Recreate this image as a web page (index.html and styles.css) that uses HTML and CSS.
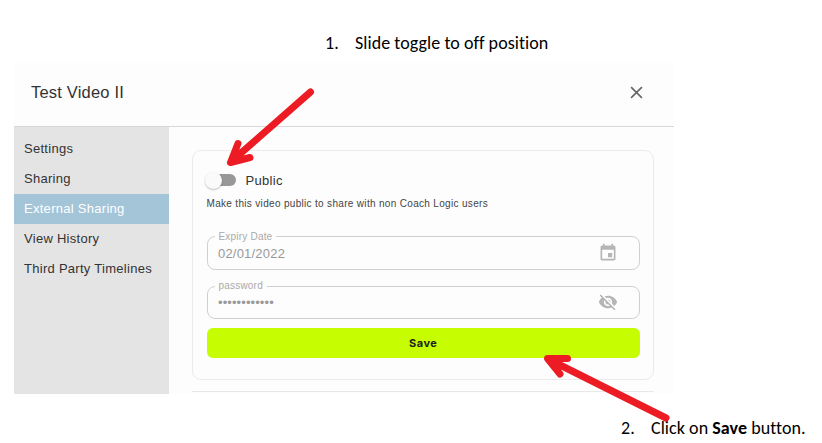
FILE: index.html
```html
<!DOCTYPE html>
<html lang="en">
<head>
    <meta charset="UTF-8">
    <meta name="viewport" content="width=device-width, initial-scale=1.0">
    <title>Test Video II</title>
    <link rel="stylesheet" href="styles.css">
</head>
<body>
    <div class="note note-toggle"><span class="num">1.</span><span>Slide toggle to off position</span></div>

    <div class="dialog">
        <div class="dialog-header">
            <h1>Test Video II</h1>
            <svg class="close" viewBox="0 0 12 12"><path d="M1 1l10 10M11 1L1 11"/></svg>
        </div>
        <div class="dialog-body">
            <nav class="sidebar">
                <a>Settings</a>
                <a>Sharing</a>
                <a class="active">External Sharing</a>
                <a>View History</a>
                <a>Third Party Timelines</a>
            </nav>
            <div class="content">
                <div class="card">
                    <div class="toggle-row">
                        <div class="toggle"><div class="knob"></div></div>
                        <span class="toggle-label">Public</span>
                    </div>
                    <p class="hint">Make this video public to share with non Coach Logic users</p>
                    <fieldset class="field field-date">
                        <legend>Expiry Date</legend>
                        <div class="field-row">
                            <span class="value">02/01/2022</span>
                            <svg class="icon" viewBox="0 0 24 24"><path d="M17 12h-5v5h5v-5zM16 1v2H8V1H6v2H5c-1.11 0-1.99.9-1.99 2L3 19c0 1.1.89 2 2 2h14c1.1 0 2-.9 2-2V5c0-1.1-.9-2-2-2h-1V1h-2zm3 18H5V8h14v11z"/></svg>
                        </div>
                    </fieldset>
                    <fieldset class="field field-password">
                        <legend>password</legend>
                        <div class="field-row">
                            <span class="value dots">••••••••••••</span>
                            <svg class="icon" viewBox="0 0 24 24"><path d="M12 7c2.76 0 5 2.24 5 5 0 .65-.13 1.26-.36 1.83l2.92 2.92c1.51-1.26 2.7-2.89 3.43-4.75-1.73-4.39-6-7.5-11-7.5-1.4 0-2.74.25-3.98.7l2.16 2.16C10.74 7.13 11.35 7 12 7zM2 4.27l2.28 2.28.46.46C3.08 8.3 1.78 10.02 1 12c1.73 4.39 6 7.5 11 7.5 1.55 0 3.03-.3 4.38-.84l.42.42L19.73 22 21 20.73 3.27 3 2 4.27zM7.53 9.8l1.55 1.55c-.05.21-.08.43-.08.65 0 1.66 1.34 3 3 3 .22 0 .44-.03.65-.08l1.55 1.55c-.67.33-1.41.53-2.2.53-2.76 0-5-2.24-5-5 0-.79.2-1.53.53-2.2zm4.31-.78l3.15 3.15.02-.16c0-1.66-1.34-3-3-3l-.17.01z"/></svg>
                        </div>
                    </fieldset>
                    <button class="save">Save</button>
                </div>
                <div class="divider"></div>
            </div>
        </div>
    </div>

    <div class="note note-save"><span class="num">2.</span><span>Click on <b>Save</b> button.</span></div>

    <!-- arrows pointing at the toggle and the save button -->
    <svg class="arrows" viewBox="0 0 822 443">
        <path d="M310.500 92L233 160M238 143.500L230.500 162.500L250 157.500"/>
        <path d="M666 418L552 361M567.500 358.500L547.500 358.500L560 374"/>
    </svg>
</body>
</html>
```

FILE: styles.css
```css
* {
    box-sizing: border-box;
}
body {
    margin: 0;
    width: 822px;
    height: 443px;
    overflow: hidden;
    position: relative;
    background: #ffffff;
    color: #333;
    font-family: "Liberation Sans", Arial, sans-serif;
}
.note {
    display: flex;
    color: #000;
    font-family: Carlito, Lato, sans-serif;
    font-size: 18px;
    line-height: 20px;
    letter-spacing: 0.06px;
    font-variant-ligatures: none;
    white-space: nowrap;
}
.note .num {
    width: 30px;
}
.note-toggle {
    padding: 33px 0 0 325px;
    height: 63px;
}
.note-save {
    padding: 24px 0 0 621px;
}
.dialog {
    width: 660px;
    height: 331px;
    margin-left: 14px;
    background: #fdfdfd;
}
.dialog-header {
    display: flex;
    align-items: center;
    justify-content: space-between;
    height: 64px;
    padding: 0 31px 4px 17px;
    border-bottom: 1px solid #d8d8d8;
}
.dialog-header h1 {
    margin: 0;
    font-size: 16.5px;
    font-weight: normal;
    letter-spacing: 0.2px;
}
.close {
    width: 13px;
    height: 13px;
    fill: none;
    stroke: #666;
    stroke-width: 1.5;
}
.dialog-body {
    display: flex;
    height: 267px;
}
.sidebar {
    width: 155px;
    padding-top: 7px;
    background: #e4e4e4;
}
.sidebar a {
    display: block;
    height: 30px;
    padding-left: 10px;
    font-size: 13px;
    line-height: 30px;
    letter-spacing: 0.28px;
    white-space: nowrap;
}
.sidebar .active {
    background: #a4c4d8;
    color: #fff;
}
.content {
    flex: 1;
    padding: 23px 20px 0 23px;
}
.card {
    height: 230px;
    padding: 19px 13px 0 13.5px;
    border: 1px solid #ebebeb;
    border-radius: 9px;
}
.toggle-row {
    display: flex;
    align-items: center;
    height: 20px;
}
.toggle {
    width: 26px;
    height: 12px;
    margin-left: 3.5px;
    border-radius: 6px;
    background: #989898;
}
.knob {
    width: 17px;
    height: 17px;
    margin: -2px 0 0 -5px;
    border-radius: 50%;
    background: #fafafa;
    box-shadow: 0 1px 2px rgba(0, 0, 0, 0.25);
}
.toggle-label {
    margin-left: 9.5px;
    font-size: 13px;
    letter-spacing: 0.3px;
}
.hint {
    margin: 7px 0 0;
    font-size: 10px;
    line-height: 14px;
    letter-spacing: 0.32px;
    color: #444;
    white-space: nowrap;
}
.field {
    min-width: 0;
    height: 39px;
    margin: 0;
    padding: 0 21px 0 7px;
    border: 1px solid #d0d0d0;
    border-radius: 8px;
    color: #999;
}
.field-date {
    height: 40px;
    margin-top: 19px;
}
.field-date .field-row {
    padding-top: 1px;
    height: 21px;
}
.field-password {
    margin-top: 10px;
}
.field legend {
    height: 12px;
    padding: 0 4px;
    font-size: 10px;
    line-height: 12px;
    letter-spacing: 0.2px;
    color: #aaa;
}
.field-date legend {
    line-height: 14px;
}
.field-row {
    display: flex;
    align-items: center;
    justify-content: space-between;
    height: 20px;
}
.value {
    padding-left: 3.5px;
    font-size: 13px;
    letter-spacing: 0.2px;
}
.dots {
    letter-spacing: 0.1px;
}
.icon {
    width: 20px;
    height: 20px;
    fill: #b5b5b5;
}
.save {
    display: block;
    width: 100%;
    height: 30px;
    margin-top: 9px;
    padding: 0;
    border: none;
    border-radius: 6px;
    background: #c6fd00;
    color: #222;
    font-family: Inter, "Liberation Sans", sans-serif;
    font-size: 11px;
    font-weight: bold;
    letter-spacing: 0.5px;
}
.divider {
    margin-top: 11px;
    border-top: 1px solid #e8e8e8;
}
.arrows {
    position: absolute;
    top: 0;
    left: 0;
    width: 822px;
    height: 443px;
    fill: none;
    stroke: #ed1c24;
    stroke-width: 7;
    stroke-linecap: round;
    stroke-linejoin: round;
}
```
